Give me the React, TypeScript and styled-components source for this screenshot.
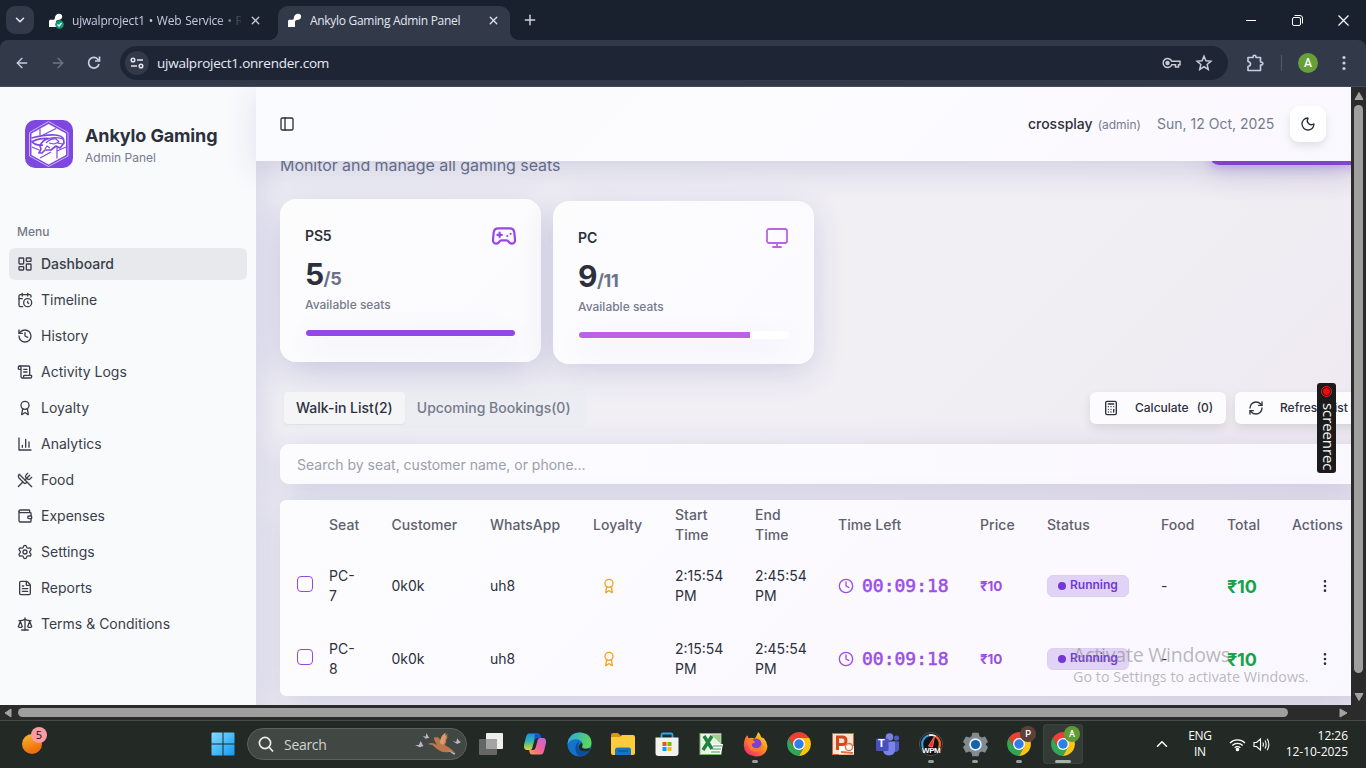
import React from 'react';
import styled, { createGlobalStyle, css } from 'styled-components';
import {
  LayoutDashboard, CalendarClock, History, ScrollText, Award, UtensilsCrossed, Wallet,
  Settings, FileText, Scale, PanelLeft, Moon, Gamepad2, Monitor, Calculator, RefreshCw,
  Clock, EllipsisVertical, ChevronDown, ChevronUp, X, Plus, ArrowLeft, ArrowRight,
} from 'lucide-react';

const ui = `'Open Sans', 'Noto Sans', sans-serif`;
const glass = '0 8px 32px rgba(45, 42, 145, 0.16)';

const Global = createGlobalStyle`
  * { box-sizing: border-box; }
  html, body { margin: 0; overflow: hidden; background: #19202e; }
  button, input { font: inherit; border: 0; margin: 0; }
  svg { display: block; flex: none; }
`;

const Screen = styled.div`
  position: relative;
  width: 1366px;
  height: 768px;
  display: flex;
  flex-direction: column;
  overflow: hidden;
  font-family: Inter, sans-serif;
  color: #2c303c;
`;

/* ---------- browser frame ---------- */
const TabStrip = styled.div`
  height: 40px;
  display: flex;
  align-items: center;
  background: #19202e;
  padding-left: 6px;
  font-family: ${ui};
  font-size: 12px;
  color: #c6cbe0;
`;
const TabSearch = styled.button`
  width: 28px;
  height: 28px;
  border-radius: 9px;
  background: #323a4a;
  color: #e6e9f4;
  display: grid;
  place-items: center;
  padding: 0;
`;
const Tab = styled.div<{ $active?: boolean; $w: number; $gap: number }>`
  position: relative;
  width: ${p => p.$w}px;
  height: 34px;
  align-self: flex-end;
  display: flex;
  align-items: center;
  padding: 0 10px 5px 9px;
  gap: ${p => p.$gap}px;
  border-radius: 10px 10px 0 0;
  letter-spacing: -0.3px;
  ${p => p.$active && css`
    background: #323a4a;
    color: #e3e6f2;
    &::before, &::after {
      content: '';
      position: absolute;
      bottom: 0;
      width: 8px;
      height: 8px;
    }
    &::before { left: -8px; background: radial-gradient(circle at 0 0, transparent 7.5px, #323a4a 8px); }
    &::after { right: -8px; background: radial-gradient(circle at 100% 0, transparent 7.5px, #323a4a 8px); }
  `}
`;
const TabTitle = styled.span<{ $fade?: boolean }>`
  flex: 1;
  overflow: hidden;
  white-space: nowrap;
  ${p => p.$fade && css`
    letter-spacing: -0.2px;
    word-spacing: 0.9px;
    mask-image: linear-gradient(90deg, #000 86%, transparent 102%);
  `}
`;
const NewTab = styled.div`margin-left: 12px; color: #ccd2e4;`;
const WindowControls = styled.div`
  margin-left: auto;
  display: flex;
  color: #fff;
  > * { width: 46px; display: grid; place-items: center; }
`;
const Toolbar = styled.div`
  height: 47px;
  position: relative;
  display: flex;
  align-items: center;
  padding: 0 15px 1px 14px;
  background: #323a4a;
  border-radius: 8px 8px 0 0;
  border-bottom: 1px solid #454b58;
  color: #c6cee4;
`;
const NavButtons = styled.div`
  display: flex;
  gap: 20px;
  width: 106px;
  > :nth-child(2) { opacity: 0.4; }
`;
const Omnibox = styled.div`
  width: 1108px;
  height: 34px;
  border-radius: 17px;
  background: #1e2635;
  display: flex;
  align-items: center;
  padding: 0 15px 0 5px;
  font-family: ${ui};
  font-size: 13.5px;
  letter-spacing: -0.24px;
  color: #e8ebf5;
`;
const SiteInfo = styled.span`
  width: 24px;
  height: 24px;
  border-radius: 50%;
  background: #323a4a;
  display: grid;
  place-items: center;
  margin-right: 8px;
`;
const OmniIcons = styled.div`margin-left: auto; display: flex; gap: 14px; align-items: center;`;
const ToolbarEnd = styled.div`flex: 1; display: flex; align-items: center; justify-content: flex-end;`;
const Divider = styled.i`width: 1px; height: 16px; background: #535c70; margin: 0 16px 0 17px;`;
const Avatar = styled.span<{ $size: number; $bg: string }>`
  width: ${p => p.$size}px;
  height: ${p => p.$size}px;
  border-radius: 50%;
  background: ${p => p.$bg};
  color: #fff;
  font: 500 ${p => Math.round(p.$size * 0.58)}px Roboto, sans-serif;
  display: grid;
  place-items: center;
`;
const Viewport = styled.div`height: 618px; display: flex;`;
const VScroll = styled.div`
  width: 15px;
  background: #2b2b2b;
  display: flex;
  flex-direction: column;
  align-items: center;
  padding: 4px 0 3px;
`;
const VThumb = styled.div`width: 9px; height: 568px; margin: 4px 0 auto; border-radius: 5px; background: #9f9f9f;`;
const HScroll = styled.div`
  height: 15px;
  background: #2b2b2b;
  display: flex;
  align-items: center;
  padding: 0 18px 0 4px;
`;
const HThumb = styled.div`height: 9px; width: 1270px; margin: 0 auto 0 4px; border-radius: 5px; background: #9f9f9f;`;

/* ---------- sidebar ---------- */
const Sidebar = styled.aside`
  width: 256px;
  flex: none;
  background: #f9fafc;
  box-shadow: ${glass};
  padding: 33px 9px 0;
`;
const Brand = styled.div`display: flex; align-items: center; gap: 12px; padding-left: 16px;`;
const BrandName = styled.div`font-size: 18px; line-height: 28px; font-weight: 700; letter-spacing: -0.13px;`;
const BrandSub = styled.div`font-size: 12px; line-height: 16px; color: #757b8c;`;
const MenuLabel = styled.div`
  margin-top: 48px;
  height: 32px;
  padding: 0 8px;
  line-height: 31px;
  font-size: 12px;
  font-weight: 500;
  color: #757984;
`;
const MenuList = styled.nav`display: flex; flex-direction: column; gap: 4px;`;
const MenuItem = styled.a<{ $active?: boolean }>`
  height: 32px;
  padding: 0 8px;
  border-radius: 6px;
  display: flex;
  align-items: center;
  gap: 8px;
  font-size: 14px;
  line-height: 20px;
  font-weight: ${p => (p.$active ? 500 : 400)};
  color: #3a3e49;
  background: ${p => (p.$active ? '#e8e9ec' : 'transparent')};
  span { padding-bottom: 1px; }
`;

/* ---------- main ---------- */
const Main = styled.main`
  position: relative;
  flex: 1;
  min-width: 0;
  overflow: hidden;
  background: linear-gradient(135deg, #efeff5 0%, #f1eff4 50%, #ede7f0 100%);
  box-shadow: inset 24px 0 24px -14px rgba(45, 42, 145, 0.1);
`;
const PageHeader = styled.header`
  position: relative;
  z-index: 2;
  height: 74px;
  display: flex;
  align-items: center;
  padding: 0 25px 0 23px;
  background: linear-gradient(135deg, #fafbfe 0%, #fcfbfe 50%, #faf8ff 100%);
  box-shadow: ${glass};
`;
const HeaderShade = styled.div`
  position: absolute;
  z-index: 3;
  left: 216px;
  top: 87px;
  width: 40px;
  height: 118px;
  overflow: hidden;
  pointer-events: none;
  &::after {
    content: '';
    position: absolute;
    left: 40px;
    width: 200px;
    height: 74px;
    box-shadow: 0 8px 32px rgba(45, 42, 145, 0.13);
  }
`;
const UserName = styled.span`margin-left: auto; font-size: 14px; line-height: 20px; font-weight: 500; padding-bottom: 1px;`;
const UserRole = styled.span`margin: 1px 16px 0 5px; font-size: 12px; color: #757b8c;`;
const Today = styled.span`font-size: 14px; line-height: 20px; padding-bottom: 1px; color: #757b8c; width: 133px;`;
const ThemeButton = styled.button`
  width: 36px;
  height: 36px;
  border-radius: 9px;
  display: grid;
  place-items: center;
  padding: 0;
  color: #2c303c;
  background: #fff;
  box-shadow: 0 4px 8px rgba(0, 0, 0, 0.1);
`;
const Content = styled.div`width: 1108px; padding: 0 0 0 24px;`;
const Intro = styled.div`
  height: 44px;
  margin-top: -40px;
  margin-bottom: 34px;
  display: flex;
  justify-content: space-between;
  align-items: flex-end;
`;
const IntroText = styled.p`margin: 0 0 -12px; font-size: 16px; line-height: 24px; letter-spacing: -0.06px; color: #6b7288;`;
const AddButton = styled.button`
  width: 154px;
  height: 40px;
  border-radius: 9px;
  background: #8b45dc;
  box-shadow: 0 8px 32px rgba(60, 50, 150, 0.12), 0 4px 10px rgba(139, 69, 220, 0.25);
`;
const Cards = styled.section`display: flex; gap: 12px; align-items: flex-start;`;
const SeatCard = styled.article<{ $raised?: boolean }>`
  width: 261px;
  height: 163px;
  margin-top: ${p => (p.$raised ? 0 : 2)}px;
  padding: 25px;
  border-radius: 16px;
  background: ${p => (p.$raised ? 'linear-gradient(135deg,#fcfcfd,#fbfbfe)' : 'linear-gradient(135deg,#fcfcfd,#fbfaff)')};
  box-shadow: ${p => (p.$raised ? '0 10px 36px rgba(45, 42, 145, 0.2)' : glass)};
`;
const CardTop = styled.div<{ $tone: string; $zoom: number }>`
  height: 24px;
  margin-bottom: 8px;
  display: flex;
  justify-content: space-between;
  align-items: center;
  font-size: 14px;
  line-height: 20px;
  font-weight: 600;
  letter-spacing: -0.15px;
  span { padding-bottom: 1px; }
  svg { color: ${p => p.$tone}; transform: scale(${p => p.$zoom}); }
`;
const Count = styled.div`
  height: 36px;
  font-size: 30px;
  line-height: 36px;
  font-weight: 700;
  letter-spacing: -0.6px;
  span { font-size: 18px; line-height: 1; font-weight: 700; letter-spacing: -0.3px; color: #6b7288; }
`;
const CardNote = styled.div`margin: 5px 0 16px; font-size: 12px; line-height: 16px; font-weight: 500; color: #757b8c;`;
const Track = styled.div`
  height: 8px;
  padding: 1px;
  border-radius: 4px;
  background: #fff;
  overflow: hidden;
  box-shadow: 0 8px 32px rgba(60, 50, 150, 0.09);
`;
const Fill = styled.div<{ $tone: string }>`height: 6px; border-radius: 3px 0 0 3px; background: ${p => p.$tone};`;
const Controls = styled.div`margin: 24px 0 16px; height: 40px; display: flex; align-items: center; gap: 9px;`;
const TabsBox = styled.div`
  height: 40px;
  width: 306px;
  padding: 4px;
  margin-right: auto;
  display: flex;
  border-radius: 6px;
  background: rgba(232, 236, 240, 0.5);
`;
const TabButton = styled.button<{ $on?: boolean }>`
  height: 32px;
  padding: 0 12px 1px;
  border-radius: 4px;
  font-size: 14px;
  line-height: 20px;
  font-weight: 500;
  white-space: nowrap;
  color: ${p => (p.$on ? '#2c303c' : '#757b8c')};
  background: ${p => (p.$on ? '#f5f5f8' : 'transparent')};
  box-shadow: ${p => (p.$on ? '0 1px 2px rgba(0,0,0,.06)' : 'none')};
`;
const ActionButton = styled.button<{ $w: number }>`
  width: ${p => p.$w}px;
  height: 32px;
  padding: 0 0 0 13px;
  border-radius: 6px;
  display: flex;
  align-items: center;
  font-size: 12px;
  line-height: 16px;
  font-weight: 500;
  white-space: pre;
  color: #2c303c;
  background: #fcfbfe;
  box-shadow: 0 4px 10px rgba(0, 0, 0, 0.1);
  svg { margin-right: 16px; }
  span { padding-bottom: 1px; }
  span + span { margin-left: 8px; }
`;
const SearchInput = styled.input`
  display: block;
  width: 1084px;
  height: 40px;
  padding: 1px 17px 0;
  border-radius: 9px;
  font-size: 14px;
  outline: 0;
  background: linear-gradient(90deg, #fcfcfe, #faf8ff);
  box-shadow: ${glass};
  &::placeholder { color: #9ba0ac; }
`;
const TableCard = styled.div`
  margin-top: 16px;
  width: 1084px;
  border-radius: 6px;
  background: linear-gradient(135deg, #fcfcfe 0%, #fbf9fe 60%, #faf8ff 100%);
  box-shadow: ${glass};
`;
const Table = styled.table`
  table-layout: fixed;
  width: 1084px;
  border-collapse: collapse;
  font-size: 14px;
  line-height: 20px;
  th { height: 50px; padding: 0 16px; text-align: left; font-weight: 500; color: #5d616d; letter-spacing: 0.05px; }
  td { height: 73px; padding: 0 16px 2px; }
`;
const Check = styled.span`
  display: block;
  width: 16px;
  height: 16px;
  margin: -3px 0 0 1px;
  border: 1px solid #9647e2;
  border-radius: 4px;
`;
const Timer = styled.div`
  display: flex;
  align-items: center;
  gap: 8px;
  color: #9a4ee6;
  font: 400 18px/28px 'DejaVu Sans Mono', monospace;
  -webkit-text-stroke: 0.55px #9a4ee6;
`;
const Price = styled.b`font-size: 13.5px; font-weight: 700; letter-spacing: -0.2px; color: #9a4ee6;`;
const Total = styled.b`display: block; padding-top: 2px; font-size: 18px; font-weight: 700; letter-spacing: -0.2px; color: #16a34a;`;
const Badge = styled.span`
  display: inline-flex;
  align-items: center;
  gap: 4px;
  width: 82px;
  height: 22px;
  padding-left: 10px;
  padding-bottom: 1px;
  border: 1px solid #dccff5;
  border-radius: 6px;
  background: #e0d3f6;
  color: #7038d8;
  font-size: 12px;
  font-weight: 600;
  vertical-align: middle;
  &::before { content: ''; width: 8px; height: 8px; margin-top: 1px; border-radius: 50%; background: currentColor; }
`;

/* ---------- overlays ---------- */
const Recorder = styled.div`
  position: absolute;
  z-index: 5;
  left: 1317px;
  top: 383px;
  width: 19px;
  height: 90px;
  border-radius: 3px;
  background: #1b1b1b;
  color: #f4f4f4;
  display: flex;
  flex-direction: column;
  align-items: center;
  padding-top: 3px;
  gap: 6px;
  span { writing-mode: vertical-rl; margin-left: 3px; font: 500 15px/19px ${ui}; letter-spacing: -0.1px; }
`;
const RecDot = styled.i`
  width: 11px; height: 11px; border-radius: 50%; border: 1px solid #e22; padding: 1px;
  background: #f40808 content-box;
`;
const Watermark = styled.div`
  position: absolute;
  z-index: 5;
  left: 1073px;
  top: 642px;
  font-family: ${ui};
  font-weight: 400;
  color: rgba(128, 128, 128, 0.55);
  white-space: nowrap;
`;
const WatermarkTitle = styled.div`font-size: 19.5px; line-height: 25px; letter-spacing: -0.2px;`;
const WatermarkText = styled.div`font-size: 14.3px; line-height: 20px; letter-spacing: 0.04px;`;

/* ---------- taskbar ---------- */
const Taskbar = styled.footer`
  height: 48px;
  display: flex;
  align-items: center;
  padding: 0 18px 1px 22px;
  background: #232a26;
  border-top: 1px solid #484b49;
  font-family: ${ui};
  color: #fff;
`;
const Widget = styled.div`
  position: relative;
  width: 20px;
  height: 20px;
  border-radius: 50%;
  background: linear-gradient(160deg, #f5bd2e, #f0700d 75%);
  margin-right: 160px;
`;
const Count5 = styled.span`
  position: absolute;
  left: 9px;
  top: -7px;
  width: 16px;
  height: 16px;
  border-radius: 50%;
  background: #ff99a4;
  color: #111;
  font-size: 11px;
  line-height: 16px;
  text-align: center;
`;
const AppCell = styled.div<{ $active?: boolean; $run?: boolean }>`
  position: relative;
  width: 40px;
  height: 40px;
  margin: 0 2px;
  border-radius: 4px;
  display: grid;
  place-items: center;
  ${p => p.$active && css`background: #343b37; box-shadow: inset 0 0 0 1px #3d4440;`}
  ${p => (p.$run || p.$active) && css`
    &::after {
      content: '';
      position: absolute;
      bottom: 1px;
      left: 50%;
      width: ${p.$active ? 16 : 6}px;
      height: 3px;
      border-radius: 2px;
      transform: translateX(-50%);
      background: ${p.$active ? '#a9b4a9' : '#9a9e9b'};
    }
  `}
  > ${Avatar} { position: absolute; right: 3px; top: 2px; }
`;
const TaskSearch = styled.div`
  width: 220px;
  height: 32px;
  margin: 0 2px;
  border-radius: 16px;
  border: 1px solid #5b625e;
  background: #414844;
  display: flex;
  align-items: center;
  padding: 0 3px 0 10px;
  gap: 10px;
  font-size: 14px;
  letter-spacing: -0.3px;
  color: #d0d4d2;
  > :last-child { margin-left: auto; }
`;
const Tray = styled.div`
  margin-left: auto;
  display: flex;
  align-items: center;
  font-size: 12px;
  line-height: 16px;
  text-align: center;
`;
const TrayText = styled.div<{ $right?: boolean; $ml: number; $ls?: number }>`
  margin-left: ${p => p.$ml}px;
  text-align: ${p => (p.$right ? 'right' : 'center')};
  letter-spacing: ${p => p.$ls ?? -0.3}px;
`;

/* ---------- drawings ---------- */
const Arrow = ({ d }: { d: string }) => (
  <svg width="10" height="10" viewBox="0 0 10 10"><path d={d} fill="#a3a3a3" stroke="#a3a3a3" strokeLinejoin="round" /></svg>
);
const RenderMark = ({ ok }: { ok?: boolean }) => (
  <svg width="16" height="16" viewBox="0 0 16 16">
    <path d="M1 14V8.4C1 7.4 1.600 6.800 2.600 6.800H5.200C6 6.800 6.500 6.400 6.700 5.400C7.200 2.400 8.600 .8 11 .8C13 .8 14.200 2 14.200 3.600C14.200 5.600 12.700 6.900 10.600 6.900C9.300 6.900 8 7.400 8 8.800V14Z" fill="#fff" />
    {ok && <><circle cx="11.500" cy="11.500" r="4.300" fill="#0c9b72" /><path d="M9.500 11.600l1.500 1.400 2.600-3" fill="none" stroke="#fff" strokeWidth="1.300" /></>}
  </svg>
);
const ChartBars = () => (
  <svg width="16" height="16" viewBox="0 0 24 24" fill="none" stroke="currentColor" strokeWidth="2" strokeLinecap="round" strokeLinejoin="round">
    <path d="M3 3v18h18M18 17V9M13 17V5M8 17v-3" />
  </svg>
);
const BrandLogo = () => (
  <svg width="48" height="48" viewBox="0 0 48 48">
    <rect width="48" height="48" rx="10" fill="#7e48e0" />
    <path d="M23.500 1.500L43 12.500V36L23.500 46.500L4.500 36V12.500Z" fill="none" stroke="#cdb9f7" strokeWidth="1" />
    <path d="M23.500 4L41 13.500V35L23.500 44.500L6.500 35V13.500Z" fill="#fff" />
    <g fill="none" stroke="#7e48e0" strokeWidth="1.200" strokeLinejoin="round">
      <path d="M15 8.500V15M18 15L31 8.500M32 27V38.500M32 31L41 27M15 38L26 32M7 27L14 30" />
      <path d="M6.500 21Q10 26 18 25" strokeWidth="1.600" />
      <path d="M6.500 18Q20 14.500 30 15Q37 15.500 38.500 19L39 23L35 28L31 26L26 30L20 30L17 33H14L16 29L15 26Q17 20 24 18.500Q14 18 7.500 21.500" strokeWidth="1.700" />
      <path d="M24 18.500Q30 16.500 38 19M21 23Q25 18.500 31 19L34 22L29 24L24 23M20 29L22 26L25 28M32 23L38 24" />
    </g>
  </svg>
);
const Chrome = () => (
  <svg width="26" height="26" viewBox="0 0 48 48">
    <path d="M24 13H43.050A22 22 0 0 0 4.950 13L14.500 29.500Z" fill="#e94235" />
    <path d="M4.950 13A22 22 0 0 0 24 46L33.500 29.500H14.500Z" fill="#31a753" />
    <path d="M43.050 13A22 22 0 0 1 24 46L33.500 29.500L24 13Z" fill="#fdc413" />
    <circle cx="24" cy="24" r="11" fill="#fff" /><circle cx="24" cy="24" r="8.700" fill="#2f7de9" />
  </svg>
);
const StartLogo = () => (
  <svg width="24" height="24" viewBox="0 0 24 24">
    <defs><linearGradient id="st" x1="0" y1="0" x2="1" y2="1" ><stop stopColor="#83dcff" /><stop offset="1" stopColor="#1199f4" /></linearGradient></defs>
    <path d="M1.500 .5H11.500V11.500H.5V1.500A1 1 0 0 1 1.500 .5ZM12.500 .5H22.500A1 1 0 0 1 23.500 1.500V11.500H12.500ZM.5 12.500H11.500V23.500H1.500A1 1 0 0 1 .5 22.500ZM12.500 12.500H23.500V22.500A1 1 0 0 1 22.500 23.500H12.500Z" fill="url(#st)" />
  </svg>
);
const Geese = () => (
  <svg width="48" height="26" viewBox="0 0 50 26">
    <path d="M13 13L17 12Q20 12 23 14L21 11Q19 8 20 6L24 6L27 9Q27 4 32 1L32 4L34 2L33 6L34.500 5L32 10L33 10L31 14Q35 16 37 18L41 21H36Q30 23 24 19L18 14Z" fill="#bd774c" />
    <path d="M26 12Q26 5 31 2L31.500 5L33 4L31 11L29 14Z" fill="#dc9a6e" />
    <path d="M34 19.500L42 22.500L41 24.500Z" fill="#b9b0b4" />
    <path d="M0 14L4 14L6 10L8 14L9 15L5 16.500ZM8 4.500L11 5.500L12 1.500L14 5.500L15 6.500L11 7.500ZM39 10L43 11L44 7L46 10L48 11L44 13Z" fill="#bfb4c6" />
  </svg>
);
const TaskView = () => (
  <svg width="26" height="26" viewBox="0 0 26 26">
    <rect x="8" y="2" width="17" height="16" rx="1" fill="#eee" /><rect x="1" y="8" width="18" height="16" rx="1" fill="#666" /><path d="M8 8H19V18H8Z" fill="#a3a3a3" />
  </svg>
);
const Copilot = () => (
  <svg width="24" height="24" viewBox="0 0 24 24">
    <defs>
      <linearGradient id="ca" x1="0" y1="0" x2="0" y2="1"><stop stopColor="#1a8fe8" /><stop offset=".5" stopColor="#35b8a5" /><stop offset="1" stopColor="#e8d32b" /></linearGradient>
      <linearGradient id="cb" x1="1" y1="0" x2="0" y2="1"><stop stopColor="#b46af0" /><stop offset=".5" stopColor="#f0609a" /><stop offset="1" stopColor="#fb9d52" /></linearGradient>
    </defs>
    <path d="M6 1.500H15Q17 1.500 17.500 4L18 6H14Q12 6 11.500 8L9 17Q8.500 18 6.500 18H4Q.5 18 1 13L3 5Q4 1.500 6 1.500Z" fill="url(#ca)" />
    <path d="M12 1.500H15Q17 1.500 17.500 4L18 6H14Q12 6 11 9Z" fill="#1b50c8" />
    <path d="M18 22.500H9Q7 22.500 6.500 20L6 18H10Q12 18 12.500 16L15 7Q15.500 6 17.500 6H20Q23.500 6 23 11L21 19Q20 22.500 18 22.500Z" fill="url(#cb)" />
  </svg>
);
const Edge = () => (
  <svg width="25" height="25" viewBox="0 0 24 24">
    <defs><linearGradient id="ed" x1="0" y1="0" x2="1" y2=".3"><stop stopColor="#2aa6e8" /><stop offset="1" stopColor="#5bd65c" /></linearGradient></defs>
    <circle cx="12" cy="12" r="11.500" fill="#1173c9" />
    <path d="M.6 11Q2 .5 12 .5Q23.500 1 23.500 11Q23 16 17.500 16Q14 16 14.500 13.500Q15.500 12 14.500 10Q12 6.500 7.500 7Q2 8 .6 12Z" fill="url(#ed)" />
    <path d="M8 16Q8 10.500 12 9Q9 14 12 17Q15 20 21.500 18Q18 23.500 12.500 23.500Q8.500 21.500 8 16Z" fill="#0c4f9e" />
    <path d="M14.300 10Q15.500 12 14.500 13.500Q14 16 17.500 16Q20 16.200 21.800 15V17.800Q15 20 12 17Q9.500 13 14.300 10Z" fill="#232a26" />
  </svg>
);
const Folder = () => (
  <svg width="26" height="24" viewBox="0 0 26 24">
    <path d="M1 3Q1 1 3 1H8L11 4V8H1Z" fill="#d69a12" />
    <path d="M1 5H10L12 3H23Q25 3 25 5V21Q25 23 23 23H3Q1 23 1 21Z" fill="#fdcb3c" />
    <path d="M5 23V18Q5 15.500 7.500 15.500H18.500Q21 15.500 21 18V23Z" fill="#1275c9" /><path d="M8 19H18" stroke="#0e5aa3" strokeWidth="1.500" />
  </svg>
);
const Store = () => (
  <svg width="24" height="25" viewBox="0 0 24 25">
    <path d="M6.500 7V3Q6.500 1.500 8 1.500H16Q17.500 1.500 17.500 3V7" fill="none" stroke="#2aa9ee" strokeWidth="1.800" />
    <path d="M.5 5.500H23.500V21Q23.500 24 20.500 24H3.500Q.5 24 .5 21Z" fill="#f2f2f2" />
    <path d="M7.500 10H11.500V14H7.500Z" fill="#f15022" /><path d="M12.500 10H16.500V14H12.500Z" fill="#7fba00" /><path d="M7.500 15H11.500V19H7.500Z" fill="#00a3ee" /><path d="M12.500 15H16.500V19H12.500Z" fill="#fdb900" />
  </svg>
);
const Excel = () => (
  <svg width="24" height="24" viewBox="0 0 24 24">
    <rect x="1" y="1.500" width="21" height="21" fill="#e7f3e4" stroke="#7db56e" /><path d="M12 12H24L22 22H10Z" fill="#fff" /><path d="M14 14H23M13 17H22M12 20H21" stroke="#7db98a" strokeWidth="1.300" />
    <path d="M5 4L13 17M13 4L4 18" stroke="#1f8241" strokeWidth="3.400" /><path d="M12 2.500H21V11Q17 7 12 2.500Z" fill="#9fcd8e" />
  </svg>
);
const Firefox = () => (
  <svg width="25" height="25" viewBox="0 0 24 24">
    <defs><linearGradient id="ff" x1="1" y1="0" x2=".2" y2="1"><stop stopColor="#ffe63b" /><stop offset=".45" stopColor="#ff9520" /><stop offset="1" stopColor="#f2286a" /></linearGradient></defs>
    <path d="M2 6L4 3L5.500 6Q9 5 11 6.500Q13 4.500 14.500 0Q17 2 17.500 5L20 6Q23.500 10 23.500 14Q22.500 23.500 12 23.500Q1 22.500 .8 13Q.8 9 2 6Z" fill="url(#ff)" />
    <circle cx="12.500" cy="11.500" r="5.300" fill="#7a41d8" /><path d="M3 8Q8 6 12 9.500L8.500 11.500Q8 15 12.500 15.500Q16 15.500 18 12Q18 19 12 19Q6 18.500 5.500 13Z" fill="#ff7a30" />
  </svg>
);
const PowerPoint = () => (
  <svg width="24" height="24" viewBox="0 0 24 24">
    <rect x="1.500" y="1.500" width="21" height="21" fill="#fbe3d6" stroke="#d9603a" /><path d="M6.500 18V5H11Q15 5 15 8.800T11 12.500H7" fill="none" stroke="#d5481c" strokeWidth="3" />
    <path d="M8 14H23V22.500H8Z" fill="#fff" /><circle cx="18" cy="15" r="3.600" fill="none" stroke="#e2704c" strokeWidth="1.500" /><path d="M10 20L22 21" stroke="#e2704c" strokeWidth="2" />
  </svg>
);
const Mono = styled.b`position: absolute; left: 11px; top: 13px; font: 700 11px Roboto, sans-serif;`;
const Teams = () => (
  <>
    <svg width="25" height="23" viewBox="0 0 25 23">
      <circle cx="14.500" cy="4" r="3.800" fill="#7b83eb" /><circle cx="21.500" cy="5" r="2.600" fill="#5059c9" />
      <path d="M17 8.500H24V15Q24 19 20 19Q17 19 17 16Z" fill="#5059c9" /><path d="M8 8.500H20V16Q20 22.500 14 22.500Q8 22.500 8 16Z" fill="#7b83eb" />
      <rect x="1" y="5.500" width="12.500" height="12.500" rx="1" fill="#4550bb" />
    </svg>
    <Mono>T</Mono>
  </>
);
const WpmLabel = styled.b`position: absolute; left: 11px; top: 22px; font: 700 8px 'Liberation Sans', sans-serif; letter-spacing: -0.4px;`;
const Wpm = () => (
  <>
    <svg width="24" height="24" viewBox="0 0 24 24">
      <circle cx="12" cy="12" r="11.500" fill="#111" stroke="#555" />
      <path d="M4 16A9 9 0 0 1 10 3.300" fill="none" stroke="#2aa3e0" strokeWidth="2" /><path d="M10 3.300A9 9 0 0 1 17 4.500" fill="none" stroke="#eee" strokeWidth="2" /><path d="M17 4.500A9 9 0 0 1 20 16" fill="none" stroke="#f3651f" strokeWidth="2.400" />
      <path d="M9.500 14L15.500 4.500L13.500 15Z" fill="#f22" stroke="#f66" />
    </svg>
    <WpmLabel>WPM</WpmLabel>
  </>
);
const Gear = () => (
  <svg width="25" height="25" viewBox="0 0 24 24">
    <path d="M9 .8H15L15.800 4L18 5.200L21.200 4.200L24 9.300L21.700 11.800L24 14.700L21.200 19.800L18 18.800L15.800 20L15 23.200H9L8.200 20L6 18.800L2.800 19.800L0 14.700L2.300 12L0 9.300L2.800 4.200L6 5.200L8.200 4Z" fill="#838b92" />
    <circle cx="12" cy="12" r="6" fill="#e9f1f7" /><circle cx="12" cy="12" r="4.400" fill="#1064ad" />
  </svg>
);

const menu = [
  ['Dashboard', LayoutDashboard], ['Timeline', CalendarClock], ['History', History],
  ['Activity Logs', ScrollText], ['Loyalty', Award], ['Analytics', ChartBars],
  ['Food', UtensilsCrossed], ['Expenses', Wallet], ['Settings', Settings],
  ['Reports', FileText], ['Terms & Conditions', Scale],
] as const;

const columns: [string, number][] = [
  ['', 33], ['Seat', 62.5], ['Customer', 98.5], ['WhatsApp', 103], ['Loyalty', 82], ['Start Time', 80],
  ['End Time', 83], ['Time Left', 142], ['Price', 67], ['Status', 114], ['Food', 66], ['Total', 65], ['Actions', 88],
];
const seats = ['PC-7', 'PC-8'];

const apps: { icon: React.ReactNode; run?: boolean; active?: boolean; who?: [string, string] }[] = [
  { icon: <TaskView /> }, { icon: <Copilot /> }, { icon: <Edge /> }, { icon: <Folder /> }, { icon: <Store /> },
  { icon: <Excel /> }, { icon: <Firefox />, run: true }, { icon: <Chrome /> }, { icon: <PowerPoint /> },
  { icon: <Teams /> }, { icon: <Wpm />, run: true }, { icon: <Gear />, run: true },
  { icon: <Chrome />, run: true, who: ['P', '#5d4037'] }, { icon: <Chrome />, active: true, who: ['A', '#5f9c35'] },
];

export default function App() {
  return (
    <Screen>
      <Global />
      <TabStrip>
        <TabSearch><ChevronDown size={14} strokeWidth={2.6} /></TabSearch>
        <Tab $w={233} $gap={8} style={{ marginLeft: 5, marginRight: 6 }}>
          <RenderMark ok />
          <TabTitle $fade>ujwalproject1 • Web Service • R</TabTitle>
          <X size={13} strokeWidth={2.4} />
        </Tab>
        <Tab $active $w={232} $gap={7}>
          <RenderMark />
          <TabTitle>Ankylo Gaming Admin Panel</TabTitle>
          <X size={13} strokeWidth={2.4} />
        </Tab>
        <NewTab><Plus size={16} strokeWidth={2.2} /></NewTab>
        <WindowControls>
          <span><svg width="10" height="10"><path d="M0 5.500H10" stroke="#fff" /></svg></span>
          <span><svg width="11" height="11" fill="none" stroke="#fff"><rect x=".5" y="2.500" width="8" height="8" rx="1.500" /><path d="M2.500 .5H8Q10.500 .5 10.500 3V8.500" /></svg></span>
          <span><svg width="11" height="11"><path d="M.5 .5L10.500 10.500M10.500 .5L.5 10.500" stroke="#fff" strokeWidth="1.200" /></svg></span>
        </WindowControls>
      </TabStrip>
      <Toolbar>
        <NavButtons>
          <ArrowLeft size={16} /><ArrowRight size={16} />
          <svg width="16" height="16" viewBox="0 0 16 16" fill="none" stroke="currentColor" strokeWidth="1.700"><path d="M13 9A5.300 5.300 0 1 1 11.800 4.200L13 5.500" /><path d="M13.500 1.500V6H9" /></svg>
        </NavButtons>
        <Omnibox>
          <SiteInfo>
            <svg width="14" height="14" viewBox="0 0 14 14" fill="none" stroke="#e3e6f0" strokeWidth="1.500"><circle cx="3" cy="4" r="1.800" /><path d="M7 4H13M1 10H7" /><circle cx="11" cy="10" r="1.800" /></svg>
          </SiteInfo>
          ujwalproject1.onrender.com
          <OmniIcons>
            <svg width="19" height="12" viewBox="0 0 19 12" fill="none" stroke="#c6cad4" strokeWidth="1.500"><path d="M9.800 4.300H18V7.700H16.500V10H13.500V7.700H9.800A4.500 4.500 0 1 1 9.800 4.300Z" /><circle cx="5.500" cy="6" r="1.500" fill="#c6cad4" /></svg>
            <svg width="18" height="18" viewBox="0 0 24 24" fill="none" stroke="#c6cad4" strokeWidth="2"><path d="M12 3L14.600 9.100L21.200 9.700L16.200 14L17.700 20.500L12 17L6.300 20.500L7.800 14L2.800 9.700L9.400 9.100Z" /></svg>
          </OmniIcons>
        </Omnibox>
        <ToolbarEnd>
          <svg width="18" height="18" viewBox="0 0 18 18" fill="none" stroke="currentColor" strokeWidth="1.600" strokeLinejoin="round"><path d="M2 3.500H7Q7 1.200 8.500 1.200T10 3.500H14.500V8Q16.800 8 16.800 9.500T14.500 11V16.500H2V12.500Q4.500 12 4.500 10T2 7.500Z" /></svg>
          <Divider />
          <Avatar $size={20} $bg="#679f38">A</Avatar>
          <svg width="4" height="16" viewBox="0 0 4 16" fill="currentColor" style={{ marginLeft: 24, marginRight: 5 }}><circle cx="2" cy="2.500" r="1.600" /><circle cx="2" cy="8" r="1.600" /><circle cx="2" cy="13.500" r="1.600" /></svg>
        </ToolbarEnd>
      </Toolbar>

      <Viewport>
        <Sidebar>
          <Brand>
            <BrandLogo />
            <div><BrandName>Ankylo Gaming</BrandName><BrandSub>Admin Panel</BrandSub></div>
          </Brand>
          <MenuLabel>Menu</MenuLabel>
          <MenuList>
            {menu.map(([label, Icon], i) => (
              <MenuItem key={label} $active={i === 0}><Icon size={16} /><span>{label}</span></MenuItem>
            ))}
          </MenuList>
        </Sidebar>
        <Main>
          <PageHeader>
            <PanelLeft size={16} />
            <UserName>crossplay</UserName>
            <UserRole>(admin)</UserRole>
            <Today>Sun, 12 Oct, 2025</Today>
            <ThemeButton><Moon size={16} /></ThemeButton>
          </PageHeader>
          <Content>
            <Intro>
              <IntroText>Monitor and manage all gaming seats</IntroText>
              <AddButton aria-label="Add" />
            </Intro>
            <Cards>
              <SeatCard $raised>
                <CardTop $tone="#9647e8" $zoom={1.1}><span>PS5</span><Gamepad2 size={24} /></CardTop>
                <Count>5<span>/5</span></Count>
                <CardNote>Available seats</CardNote>
                <Track><Fill $tone="#9647e8" style={{ width: '100%', borderRadius: 3 }} /></Track>
              </SeatCard>
              <SeatCard>
                <CardTop $tone="#bb63e4" $zoom={1}><span>PC</span><Monitor size={24} strokeWidth={1.8} /></CardTop>
                <Count>9<span>/11</span></Count>
                <CardNote>Available seats</CardNote>
                <Track><Fill $tone="#bb63e4" style={{ width: `${(9 / 11) * 100}%` }} /></Track>
              </SeatCard>
            </Cards>
            <Controls>
              <TabsBox>
                <TabButton $on>Walk-in List(2)</TabButton>
                <TabButton>Upcoming Bookings(0)</TabButton>
              </TabsBox>
              <ActionButton $w={136}><Calculator size={16} /><span>Calculate</span><span>(0)</span></ActionButton>
              <ActionButton $w={129}><RefreshCw size={16} /><span>Refresh List</span></ActionButton>
            </Controls>
            <SearchInput placeholder="Search by seat, customer name, or phone..." />
            <TableCard>
              <Table>
                <colgroup>{columns.map(([n, w]) => <col key={n} style={{ width: w }} />)}</colgroup>
                <thead><tr>{columns.map(([n]) => <th key={n}>{n}</th>)}</tr></thead>
                <tbody>
                  {seats.map(seat => (
                    <tr key={seat}>
                      <td><Check /></td>
                      <td>{seat}</td>
                      <td>0k0k</td>
                      <td>uh8</td>
                      <td><Award size={16} color="#f3a21c" style={{ marginLeft: 8 }} /></td>
                      <td>2:15:54 PM</td>
                      <td>2:45:54 PM</td>
                      <td><Timer><Clock size={16} />00:09:18</Timer></td>
                      <td><Price>₹10</Price></td>
                      <td><Badge>Running</Badge></td>
                      <td>-</td>
                      <td><Total>₹10</Total></td>
                      <td><EllipsisVertical size={16} style={{ marginLeft: 25 }} /></td>
                    </tr>
                  ))}
                </tbody>
              </Table>
            </TableCard>
          </Content>
        </Main>
        <VScroll>
          <Arrow d="M5 1.500L9 8.500H1Z" />
          <VThumb />
          <Arrow d="M5 8.500L9 1.500H1Z" />
        </VScroll>
      </Viewport>
      <HScroll>
        <Arrow d="M1 5L7 1V9Z" />
        <HThumb />
        <Arrow d="M9 5L2 1V9Z" />
      </HScroll>

      <Taskbar>
        <Widget><Count5>5</Count5></Widget>
        <AppCell style={{ marginLeft: 1 }}><StartLogo /></AppCell>
        <TaskSearch>
          <svg width="16" height="16" viewBox="0 0 16 16" fill="none" stroke="#e8ebe9" strokeWidth="1.700"><circle cx="7" cy="7" r="5.600" /><path d="M11 11L15 15.500" /></svg>
          Search
          <Geese />
        </TaskSearch>
        {apps.map((a, i) => (
          <AppCell key={i} $run={a.run} $active={a.active}>
            {a.icon}
            {a.who && <Avatar $size={16} $bg={a.who[1]}>{a.who[0]}</Avatar>}
          </AppCell>
        ))}
        <Tray>
          <ChevronUp size={18} />
          <TrayText $ml={17}>ENG<br />IN</TrayText>
          <svg width="17" height="15" viewBox="0 0 17 15" fill="none" stroke="#fff" strokeWidth="1.200" style={{ marginLeft: 17 }}><path d="M1 6A10.500 10.500 0 0 1 16 6M3.300 8.500A7.200 7.200 0 0 1 13.700 8.500M5.600 10.800A4 4 0 0 1 11.400 10.800" /><circle cx="8.500" cy="12.500" r="1.200" fill="#fff" /></svg>
          <svg width="18" height="15" viewBox="0 0 18 15" fill="none" stroke="#fff" strokeWidth="1.100" style={{ marginLeft: 7 }}><path d="M1 5.500H3.500L7.500 2V13L3.500 9.500H1ZM9.800 5.500Q11 7.500 9.800 9.500M12 3.500Q14.300 7.500 12 11.500M14.200 1.800Q17.600 7.500 14.200 13.200" /></svg>
          <TrayText $right $ml={15} $ls={-0.03}>12:26<br />12-10-2025</TrayText>
        </Tray>
      </Taskbar>

      <HeaderShade />
      <Recorder><RecDot /><span>screenrec</span></Recorder>
      <Watermark>
        <WatermarkTitle>Activate Windows</WatermarkTitle>
        <WatermarkText>Go to Settings to activate Windows.</WatermarkText>
      </Watermark>
    </Screen>
  );
}
